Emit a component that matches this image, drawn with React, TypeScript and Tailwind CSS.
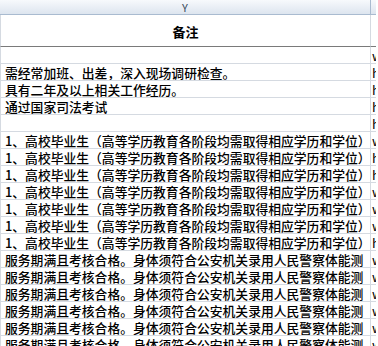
const GRID = 'border-[#d5dae1]';

const rows: { text: string; z: string }[] = [
  { text: '需经常加班、出差，深入现场调研检查。', z: 'h' },
  { text: '具有二年及以上相关工作经历。', z: 'h' },
  { text: '通过国家司法考试', z: 'h' },
  { text: '', z: 'h' },
  ...['w', 'h', 'h', 'w', 'w', 'w', 'h'].map((z) => ({
    text: '1、高校毕业生（高等学历教育各阶段均需取得相应学历和学位）',
    z,
  })),
  ...['w', 'w', 'w', 'w', 'w', 'w'].map((z) => ({
    text: '服务期满且考核合格。身体须符合公安机关录用人民警察体能测',
    z,
  })),
];

function ZCell({ z }: { z: string }) {
  return (
    <div
      className={`w-[5px] shrink-0 overflow-hidden whitespace-nowrap border-b ${GRID} pl-[1px] pt-[1px] text-[13px] leading-[15px] text-black`}
    >
      {z}
    </div>
  );
}

function Row({ text, z }: { text: string; z: string }) {
  return (
    <div className="flex h-[17px] shrink-0">
      <div
        className={`w-[371px] shrink-0 overflow-hidden whitespace-nowrap border-b border-r border-l ${GRID} pl-[4px] pt-[1px] text-[12.8px] font-medium leading-[15px] text-black`}
      >
        {text}
      </div>
      <ZCell z={z} />
    </div>
  );
}

export default function App() {
  return (
    <div
      className="flex h-[346px] w-[378px] flex-col overflow-hidden bg-white"
      style={{ fontFamily: '"Noto Sans CJK SC", "Noto Sans", sans-serif' }}
    >
      {/* column header */}
      <div className="flex h-[15px] shrink-0">
        <div className="flex w-[371px] shrink-0 items-center justify-center border-b border-r border-[#a9bbd0] bg-gradient-to-b from-[#f7f9fc] to-[#dde5ef] text-[11px] leading-none text-[#3b4a5c]">
          Y
        </div>
        <div className="w-[5px] shrink-0 border-b border-[#a9bbd0] bg-gradient-to-b from-[#f7f9fc] to-[#dde5ef]" />
      </div>

      {/* title row */}
      <div className="flex h-[32px] shrink-0">
        <div className="flex w-[371px] shrink-0 items-center justify-center border-b border-r border-l border-b-[#7a7a7a] border-r-[#d5dae1] border-l-[#d5dae1] pt-[2px] text-[13px] font-bold text-black">
          备注
        </div>
        <div className="w-[5px] shrink-0 border-b border-[#7a7a7a]" />
      </div>

      {/* empty row */}
      <div className="flex h-[17px] shrink-0">
        <div className={`w-[371px] shrink-0 border-b border-r border-l ${GRID}`} />
        <ZCell z="w" />
      </div>

      {rows.map((r, i) => (
        <Row key={i} text={r.text} z={r.z} />
      ))}
    </div>
  );
}
